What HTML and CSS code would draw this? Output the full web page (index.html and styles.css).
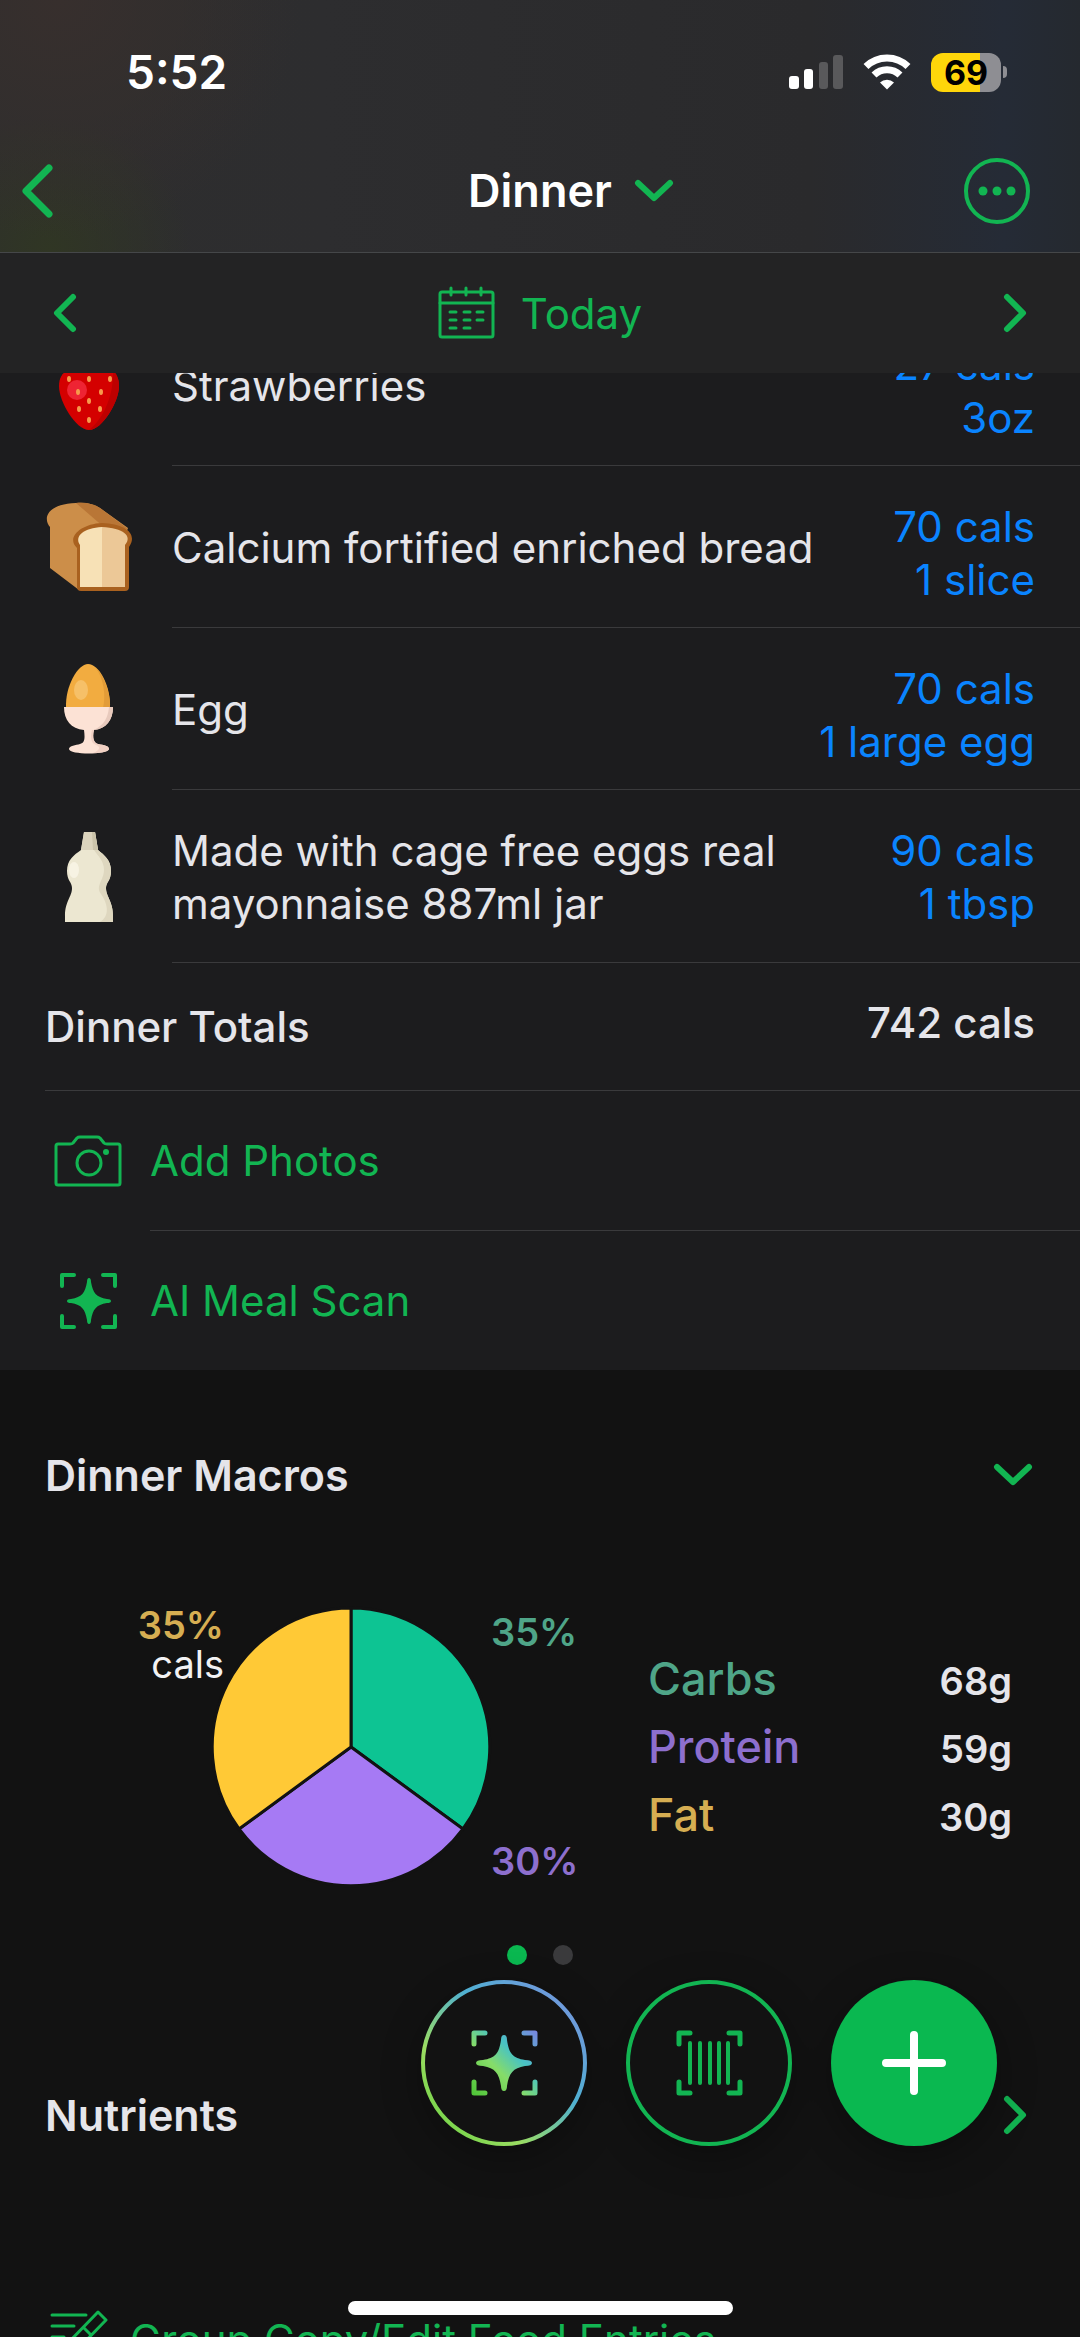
FILE: index.html
```html
<!DOCTYPE html>
<html lang="en">
<head>
  <meta charset="UTF-8" />
  <meta name="viewport" content="width=device-width, initial-scale=1.0"/>
  <title>Dinner</title>
  <link rel="stylesheet" href="styles.css">
</head>
<body>
  <header class="top">
    <div class="status">
      <span class="time">5:52</span>
      <div class="status-icons">
        <svg width="54" height="36" viewBox="0 0 54 36" fill="#fff">
          <rect x="0" y="22" width="10" height="13" rx="3"/>
          <rect x="15" y="15" width="9" height="20" rx="3"/>
          <rect x="30" y="8" width="9" height="27" rx="3" fill="#59595b"/>
          <rect x="44" y="1" width="10" height="34" rx="3" fill="#59595b"/>
        </svg>
        <svg width="48" height="36" viewBox="0 0 48 36" fill="none" stroke="#fff" stroke-width="7">
          <path d="M3 12.500A30 30 0 0 1 45 12.500"/>
          <path d="M11 21A18.500 18.500 0 0 1 37 21"/>
          <path d="M17 28.500A10 10 0 0 1 31 28.500L24 35.500Z" fill="#fff" stroke="none"/>
        </svg>
        <div class="battery"><span>69</span></div>
      </div>
    </div>
    <nav class="nav">
      <button class="back" aria-label="Back">
        <svg width="34" height="56" viewBox="0 0 34 56"><path class="line heavy" d="M29 5L6 28L29 51"/></svg>
      </button>
      <button class="title">
        Dinner
        <svg width="40" height="26" viewBox="0 0 40 26"><path class="line" d="M4 5L20 20L36 5"/></svg>
      </button>
      <button class="more" aria-label="More">
        <svg width="68" height="68" viewBox="0 0 68 68">
          <circle class="line medium" cx="34" cy="34" r="31"/>
          <g fill="#12b552"><circle cx="20" cy="34" r="4.500"/><circle cx="34" cy="34" r="4.500"/><circle cx="48" cy="34" r="4.500"/></g>
        </svg>
      </button>
    </nav>
    <div class="datebar">
      <button aria-label="Previous day">
        <svg width="26" height="40" viewBox="0 0 26 40"><path class="line" d="M21 4L5 20L21 36"/></svg>
      </button>
      <button class="today">
        <svg width="58" height="54" viewBox="0 0 58 54">
          <g class="line thin">
            <rect x="2" y="6" width="53" height="45" rx="2"/>
            <path d="M2 17H55M13 2V9M28 2V9M43 2V9"/>
            <path d="M12 26H18M26 26H32M39 26H45M12 34H18M26 34H32M39 34H45M12 42H18M26 42H32"/>
          </g>
        </svg>
        Today
      </button>
      <button aria-label="Next day">
        <svg width="26" height="40" viewBox="0 0 26 40"><path class="line" d="M5 4L21 20L5 36"/></svg>
      </button>
    </div>
  </header>

  <main>
    <section class="foods">
      <ul>
        <li class="food">
          <svg class="food-icon" viewBox="0 0 90 90">
            <path d="M45 90C32 90 15 62 15 46C15 30 28 26 45 26C62 26 75 30 75 46C75 62 58 90 45 90Z" fill="#d40000"/>
            <path d="M69 30C73 34 75 39 75 46C75 62 58 90 45 90C56 82 70 60 69 30Z" fill="#bd0000"/>
            <circle cx="33" cy="50" r="10" fill="#ee2433"/>
            <g fill="#f79a4b">
              <ellipse cx="25" cy="39" rx="2" ry="3"/><ellipse cx="45" cy="39" rx="2" ry="3"/><ellipse cx="66" cy="39" rx="2" ry="3"/>
              <ellipse cx="34" cy="52" rx="2" ry="3"/><ellipse cx="57" cy="52" rx="2" ry="3"/><ellipse cx="45" cy="61" rx="2" ry="3"/>
              <ellipse cx="35" cy="69" rx="2" ry="3"/><ellipse cx="56" cy="69" rx="2" ry="3"/><ellipse cx="45" cy="80" rx="2" ry="3"/>
            </g>
          </svg>
          <div class="food-body">
            <span class="name">Strawberries</span>
            <span class="amount">27 cals<br>3oz</span>
          </div>
        </li>
        <li class="food">
          <svg class="food-icon" viewBox="0 0 90 90">
            <path d="M6 66V25C-1 17 2 2 32 1C42 0 50 2 56 6L84 26L60 88H35Z" fill="#cc8e49"/>
            <path d="M32 1C42 0 50 2 56 6L84 27L60 25L54 20Z" fill="#b97636"/>
            <path d="M33 46C22 36 36 22 58 21C82 22 94 32 85 45V85Q85 89 81 89H37Q33 89 33 85Z" fill="#a9611f"/>
            <path d="M36 43C30 34 40 26 58 25V85H36Z" fill="#f7e1b6"/>
            <path d="M58 25C79 26 89 34 81 43V85H58Z" fill="#ecc897"/>
          </svg>
          <div class="food-body">
            <span class="name">Calcium fortified enriched bread</span>
            <span class="amount">70 cals<br>1 slice</span>
          </div>
        </li>
        <li class="food">
          <svg class="food-icon" viewBox="0 0 90 90">
            <path d="M22 44C21 22 34 0 44 0C55 0 67 22 66 44Z" fill="#f2ac40"/>
            <path d="M51 3C60 11 67 30 66 44H59C62 32 60 14 51 3Z" fill="#e29c38"/>
            <ellipse cx="37" cy="26" rx="7" ry="10" fill="#f6c068"/>
            <path d="M20 43H69C69 56 62 65 50 66C48 74 50 79 54 80C60 81 65 82 65 85C64 91 25 91 25 85C25 82 32 81 36 80C41 79 41 74 40 66C27 65 20 56 20 43Z" fill="#fce2d5"/>
            <path d="M65 43H69C69 56 62 65 50 66C60 61 64 54 65 43Z" fill="#e8cabd"/>
            <path d="M48 66C46 74 47 79 52 81C57 83 56 86 49 89C59 89 65 87 65 85C65 82 60 81 54 80C50 79 48 74 50 66Z" fill="#f0d0c3"/>
          </svg>
          <div class="food-body">
            <span class="name">Egg</span>
            <span class="amount">70 cals<br>1 large egg</span>
          </div>
        </li>
        <li class="food">
          <svg class="food-icon" viewBox="0 0 90 90">
            <path d="M40 0H51L54 18C60 23 67 28 67 39C67 49 62 50 62 56C62 65 69 69 69 84V90H21V84C21 69 28 65 28 56C28 50 23 49 23 39C23 28 30 23 37 18Z" fill="#ece7d1"/>
            <path d="M40 0H51L54 18H37Z" fill="#dcd4bd"/>
            <path d="M48 0H51L54 18H49Z" fill="#cbc3aa"/>
            <path d="M54 18C60 23 67 28 67 39C67 49 62 50 62 56C62 65 69 69 69 84V90H56C66 84 64 72 57 62C51 54 60 48 60 38C60 29 54 24 50 18Z" fill="#ded7bf"/>
            <ellipse cx="30" cy="38" rx="5" ry="8" fill="#f7f3e3"/>
          </svg>
          <div class="food-body">
            <span class="name">Made with cage free eggs real mayonnaise 887ml jar</span>
            <span class="amount">90 cals<br>1 tbsp</span>
          </div>
        </li>
      </ul>
      <div class="totals">
        <span>Dinner Totals</span>
        <span class="total-value">742 cals</span>
      </div>
      <button class="action">
        <svg width="68" height="54" viewBox="0 0 68 54">
          <g class="line thin">
            <path d="M4 10H16Q18 10 19 9L23 4Q24 3 26 3H43Q45 3 46 4L50 9Q51 10 53 10H64Q66 10 66 12V49Q66 51 64 51H4Q2 51 2 49V12Q2 10 4 10Z"/>
            <circle cx="35" cy="29" r="12"/>
          </g>
          <circle cx="52" cy="18" r="3" fill="#12b552"/>
        </svg>
        <span>Add Photos</span>
      </button>
      <button class="action">
        <svg width="68" height="58" viewBox="0 0 68 58">
          <path class="line medium" d="M8 14V3H20M49 3H61V14M61 44V55H49M20 55H8V44"/>
          <path d="M35 6Q37 6 37 10C39 21 42 25 53 27Q57 27 57 29Q57 31 53 31C42 33 39 37 37 48Q37 52 35 52Q33 52 33 48C31 37 28 33 17 31Q13 31 13 29Q13 27 17 27C28 25 31 21 33 10Q33 6 35 6Z" fill="#12b552"/>
        </svg>
        <span>AI Meal Scan</span>
      </button>
    </section>

    <section class="macros">
      <button class="section-head">
        Dinner Macros
        <svg width="40" height="26" viewBox="0 0 40 26"><path class="line" d="M4 5L20 20L36 5"/></svg>
      </button>
      <div class="macro-body">
        <svg class="pie" width="450" height="300" viewBox="0 0 450 300">
          <g stroke="#121212" stroke-width="3">
            <path d="M216 150V11A139 139 0 0 1 328 232Z" fill="#0dc493"/>
            <path d="M216 150L328 232A139 139 0 0 1 104 232Z" fill="#a67af4"/>
            <path d="M216 150L104 232A139 139 0 0 1 216 11Z" fill="#ffc936"/>
          </g>
          <text class="pct fat" x="89" y="42" text-anchor="end">35%</text>
          <text class="unit" x="89" y="81" text-anchor="end">cals</text>
          <text class="pct carbs" x="356" y="49">35%</text>
          <text class="pct protein" x="356" y="278">30%</text>
        </svg>
        <dl class="legend">
          <dt class="carbs">Carbs</dt><dd>68g</dd>
          <dt class="protein">Protein</dt><dd>59g</dd>
          <dt class="fat">Fat</dt><dd>30g</dd>
        </dl>
      </div>
      <div class="dots">
        <span class="dot active"></span>
        <span class="dot"></span>
      </div>
    </section>

    <button class="section-head nutrients">
      Nutrients
      <svg width="26" height="40" viewBox="0 0 26 40"><path class="line" d="M5 4L21 20L5 36"/></svg>
    </button>

    <button class="group-edit">
      <svg width="60" height="58" viewBox="0 0 60 58">
        <path class="line thin" d="M4 5H38M4 16H26M4 27H16M4 38H13"/>
        <path class="line thin" d="M50 2L58 10L27 42L17 45L19 34ZM36 18L43 25"/>
      </svg>
      <span>Group Copy/Edit Food Entries</span>
    </button>
  </main>

  <div class="fabs">
    <button class="fab" aria-label="AI meal scan">
      <svg width="166" height="166" viewBox="0 0 166 166">
        <defs>
          <linearGradient id="ring" x1="0" y1="1" x2="1" y2="0">
            <stop offset="0" stop-color="#62cf3c"/>
            <stop offset="0.300" stop-color="#9bdd62"/>
            <stop offset="0.600" stop-color="#4fb0d2"/>
            <stop offset="1" stop-color="#7e8fe0"/>
          </linearGradient>
          <linearGradient id="spark" gradientUnits="userSpaceOnUse" x1="50" y1="116" x2="116" y2="50">
            <stop offset="0" stop-color="#4cc435"/>
            <stop offset="0.400" stop-color="#86dc68"/>
            <stop offset="0.650" stop-color="#48c3c4"/>
            <stop offset="1" stop-color="#7a83e0"/>
          </linearGradient>
        </defs>
        <circle cx="83" cy="83" r="81" fill="#121212" stroke="url(#ring)" stroke-width="4"/>
        <path d="M53 64V53H64M103 53H114V64M114 102V113H103M64 113H53V102" fill="none" stroke="url(#spark)" stroke-width="5" stroke-linecap="round" stroke-linejoin="round"/>
        <path d="M83 55Q86 55 86 60C88 74 92 78 104 80Q111 80 111 83Q111 86 104 86C92 88 88 93 86 106Q86 111 83 111Q80 111 80 106C78 93 74 88 62 86Q55 86 55 83Q55 80 62 80C74 78 78 74 80 60Q80 55 83 55Z" fill="url(#spark)"/>
      </svg>
    </button>
    <button class="fab" aria-label="Scan barcode">
      <svg width="166" height="166" viewBox="0 0 166 166">
        <circle cx="83" cy="83" r="81" fill="#121212" stroke="#12b552" stroke-width="4"/>
        <g fill="none" stroke="#12b552" stroke-linecap="round" stroke-linejoin="round">
          <path stroke-width="5" d="M53 64V53H64M103 53H114V64M114 102V113H103M64 113H53V102"/>
          <path stroke-width="4" d="M64 63V103M74 63V103M84 63V103M93 63V103M102 63V103"/>
        </g>
      </svg>
    </button>
    <button class="fab" aria-label="Add food">
      <svg width="166" height="166" viewBox="0 0 166 166">
        <circle cx="83" cy="83" r="83" fill="#0ab850"/>
        <path d="M83 55V111M55 83H111" stroke="#fff" stroke-width="8" stroke-linecap="round"/>
      </svg>
    </button>
  </div>
  <div class="home-bar"></div>
</body>
</html>
```

FILE: styles.css
```css
* {
  box-sizing: border-box;
}
body {
  margin: 0;
  height: 100vh;
  overflow: hidden;
  background-color: #121212;
  color: #e5e5ea;
  font-family: Inter, "Liberation Sans", sans-serif;
  font-size: 42px;
  line-height: 53px;
}
button {
  padding: 0;
  border: none;
  background: none;
  color: inherit;
  font: inherit;
  text-align: left;
  cursor: pointer;
}
svg {
  display: block;
  flex: none;
}
ul, dl, dd {
  margin: 0;
  padding: 0;
  list-style: none;
}
.line {
  fill: none;
  stroke: #12b552;
  stroke-width: 6px;
  stroke-linecap: round;
  stroke-linejoin: round;
}
.line.heavy {
  stroke-width: 7px;
}
.line.medium {
  stroke-width: 4px;
}
.line.thin {
  stroke-width: 3px;
}

/* header */
.top {
  position: fixed;
  top: 0;
  left: 0;
  right: 0;
  z-index: 1;
  background:
    radial-gradient(circle at 60px 0, #372f2d, transparent 240px),
    radial-gradient(circle at 50px 250px, #303624, transparent 140px),
    linear-gradient(90deg, #2e2e2e, #2d2d2f 30%, #2a2a2c 75%, #252b36 93%, #25292f);
}
.status {
  display: flex;
  justify-content: space-between;
  align-items: center;
  height: 144px;
  padding: 0 79px 0 126px;
}
.time {
  color: #fff;
  font-size: 46px;
  font-weight: 600;
}
.status-icons {
  display: flex;
  align-items: center;
  gap: 20px;
}
.battery {
  position: relative;
  width: 70px;
  height: 39px;
  border-radius: 12px;
  background: linear-gradient(90deg, #ffd60a 70%, #8e8e93 70%);
  color: #000;
  font-size: 34px;
  font-weight: 700;
  line-height: 39px;
  text-align: center;
}
.battery::after {
  content: "";
  position: absolute;
  right: -6px;
  top: 13px;
  width: 4px;
  height: 12px;
  border-radius: 0 4px 4px 0;
  background-color: #8e8e93;
}
.nav {
  display: grid;
  grid-template-columns: 1fr auto 1fr;
  align-items: center;
  height: 109px;
  padding: 0 20px 15px;
  border-bottom: 1px solid #454749;
}
.title {
  display: flex;
  align-items: center;
  gap: 22px;
  padding-left: 62px;
  color: #fff;
  font-size: 45px;
  font-weight: 600;
}
.more {
  justify-self: end;
  margin-right: 29px;
}
.datebar {
  display: flex;
  justify-content: space-between;
  align-items: center;
  height: 120px;
  padding: 0 52px;
  background-color: #232324;
}
.today {
  display: flex;
  align-items: center;
  gap: 25px;
  color: #12b552;
}

/* food list, scrolled partly under the header */
main {
  padding-top: 304px;
}
.foods {
  background-color: #1c1c1e;
}
.food {
  display: flex;
  align-items: center;
  padding-left: 44px;
}
.food-icon {
  width: 90px;
  height: 90px;
  margin-right: 38px;
}
.food-body {
  flex: 1;
  display: flex;
  justify-content: space-between;
  align-items: center;
  gap: 24px;
  padding-right: 45px;
  border-bottom: 1px solid #3a3a3c;
}
.name {
  padding: 34px 0 32px;
}
.amount {
  align-self: flex-start;
  flex: none;
  padding: 34px 0 21px;
  color: #0a84ff;
  text-align: right;
}
.totals {
  display: flex;
  justify-content: space-between;
  align-items: center;
  height: 128px;
  margin-left: 45px;
  padding-right: 45px;
  border-bottom: 1px solid #3a3a3c;
  font-weight: 500;
}
.total-value {
  padding-bottom: 8px;
}
.action {
  display: flex;
  align-items: center;
  width: 100%;
  padding-left: 54px;
  color: #12b552;
}
.action span {
  flex: 1;
  margin-left: 28px;
  padding: 43px 0;
  border-bottom: 1px solid #3a3a3c;
}
.action:last-child span {
  border-bottom: none;
}

/* macros */
.section-head {
  display: flex;
  justify-content: space-between;
  align-items: center;
  width: 100%;
  height: 210px;
  padding: 0 47px 0 45px;
  font-size: 43px;
  font-weight: 600;
}
.macro-body {
  display: flex;
  align-items: center;
  padding: 17px 68px 0 135px;
}
.pct {
  font-size: 38px;
  font-weight: 600;
}
.unit {
  fill: #f2f2f4;
  font-size: 38px;
}
.carbs {
  color: #4fa588;
  fill: #4fa588;
}
.protein {
  color: #8d6fce;
  fill: #8d6fce;
}
.fat {
  color: #d6ae52;
  fill: #d6ae52;
}
.legend {
  flex: 1;
  display: grid;
  grid-template-columns: 1fr auto;
  grid-auto-rows: 68px;
  align-items: baseline;
  margin-left: 63px;
  line-height: 68px;
}
.legend dt {
  font-size: 45px;
  font-weight: 500;
}
.legend dd {
  font-size: 38px;
  font-weight: 600;
  text-align: right;
}
.dots {
  display: flex;
  justify-content: center;
  gap: 26px;
  padding: 48px 0 45px;
}
.dot {
  width: 20px;
  height: 20px;
  border-radius: 50%;
  background-color: #3a3a3c;
}
.dot.active {
  background-color: #0ab850;
}
.nutrients {
  padding-right: 52px;
}
.group-edit {
  display: flex;
  align-items: center;
  gap: 22px;
  height: 140px;
  margin-top: 49px;
  padding-left: 48px;
  color: #12b552;
}

/* floating buttons */
.fabs {
  position: fixed;
  right: 83px;
  bottom: 191px;
  display: flex;
  gap: 39px;
}
.fab {
  border-radius: 50%;
  box-shadow: 0 12px 40px rgba(0, 0, 0, 0.3);
}
.home-bar {
  position: fixed;
  left: 50%;
  bottom: 22px;
  width: 385px;
  height: 14px;
  margin-left: -192px;
  border-radius: 7px;
  background-color: #fff;
}
```
